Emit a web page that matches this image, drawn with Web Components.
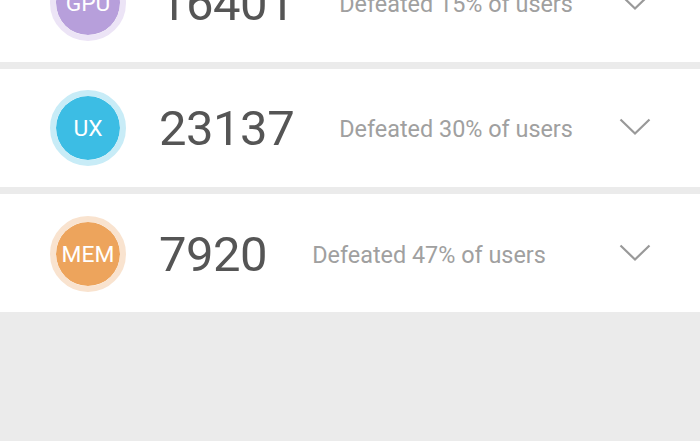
<!DOCTYPE html>
<html>
<head>
<meta charset="utf-8">
<title>Scores</title>
<style>
    html, body {
        margin: 0;
        height: 100%;
        overflow: hidden;
        background: #ebebeb;
        font-family: Roboto, sans-serif;
    }
</style>
</head>
<body>

<score-list>
    <score-row label="GPU" score="16401" percent="15" color="#b79fdb" ring="#ecE4f6"></score-row>
    <score-row label="UX" score="23137" percent="30" color="#3cbde4" ring="#c8ecf7"></score-row>
    <score-row label="MEM" score="7920" percent="47" color="#eda45c" ring="#f9e3cf"></score-row>
</score-list>

<script>
const listTemplate = document.createElement('template');
listTemplate.innerHTML = `
    <style>
        :host {
            display: flex;
            flex-direction: column;
            gap: 7.5px;
            margin-top: -56px;
        }
    </style>
    <slot></slot>
`;

class ScoreList extends HTMLElement {
    constructor() {
        super();
        this.attachShadow({ mode: 'open' });
        this.shadowRoot.appendChild(listTemplate.content.cloneNode(true));
    }
}

const rowTemplate = document.createElement('template');
rowTemplate.innerHTML = `
    <style>
        :host {
            display: flex;
            align-items: center;
            box-sizing: border-box;
            height: 117.5px;
            padding: 0 49px 0 50px;
            background: #fff;
        }

        :host(:last-child) {
            padding-top: 2px;
        }

        .badge {
            flex: none;
            display: flex;
            justify-content: center;
            align-items: center;
            box-sizing: border-box;
            width: 76px;
            height: 76px;
            padding-top: 2px;
            border-radius: 50%;
            border: 6px solid var(--ring);
            background: var(--fill);
            background-clip: padding-box;
            color: #fff;
            font-size: 22.8px;
        }

        .score {
            margin: 2px 0 0 33px;
            color: #555;
            font-size: 49px;
            letter-spacing: -0.5px;
        }

        .defeated {
            margin: 2px 0 0 45px;
            color: #a0a0a0;
            font-size: 23.4px;
        }

        svg {
            display: block;
            margin-left: auto;
            margin-top: -2px;
        }
    </style>
    <span class="badge"></span>
    <span class="score"></span>
    <span class="defeated"></span>
    <svg width="32" height="18" viewBox="0 0 32 18" fill="none" stroke="#999" stroke-width="2.2">
        <path d="M1.5 1.5 L16 15.5 L30.5 1.5"/>
    </svg>
`;

class ScoreRow extends HTMLElement {
    constructor() {
        super();
        this.attachShadow({ mode: 'open' });
        this.shadowRoot.appendChild(rowTemplate.content.cloneNode(true));
    }

    connectedCallback() {
        const root = this.shadowRoot;
        const badge = root.querySelector('.badge');
        badge.textContent = this.getAttribute('label');
        badge.style.setProperty('--fill', this.getAttribute('color'));
        badge.style.setProperty('--ring', this.getAttribute('ring'));
        root.querySelector('.score').textContent = this.getAttribute('score');
        root.querySelector('.defeated').textContent = `Defeated ${this.getAttribute('percent')}% of users`;
    }
}

customElements.define('score-list', ScoreList);
customElements.define('score-row', ScoreRow);
</script>
</body>
</html>
